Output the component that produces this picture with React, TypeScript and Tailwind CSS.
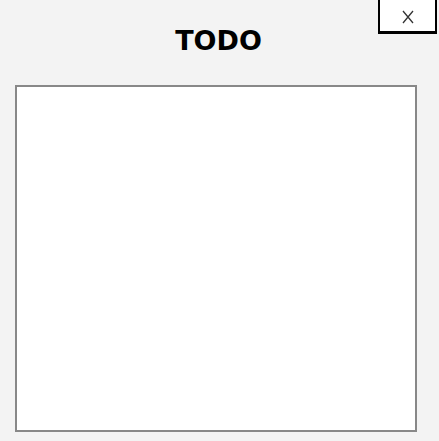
export default function App() {
  return (
    <div className="relative h-[441px] w-[439px] overflow-hidden bg-[#f3f3f3] font-['Liberation_Sans',Arial,sans-serif]">
      <button
        type="button"
        aria-label="Close"
        className="absolute right-[2px] top-[-4px] flex h-[38px] w-[59px] items-center justify-center border-2 border-b-[3px] border-black bg-white pt-[4px]"
      >
        <svg width="12" height="14" viewBox="0 0 12 14" aria-hidden>
          <path d="M1 1 L11 13 M11 1 L1 13" stroke="#333" strokeWidth="1.3" fill="none" />
        </svg>
      </button>
      <div className="flex flex-col pt-[26px]">
        <h1 className="pr-[2px] text-center font-['DejaVu_Sans',sans-serif] text-[27px] font-bold leading-[30px] text-black">
          TODO
        </h1>
        <div className="ml-[15px] mt-[29px] h-[347px] w-[402px] border-2 border-[#888] bg-white" />
      </div>
    </div>
  );
}
